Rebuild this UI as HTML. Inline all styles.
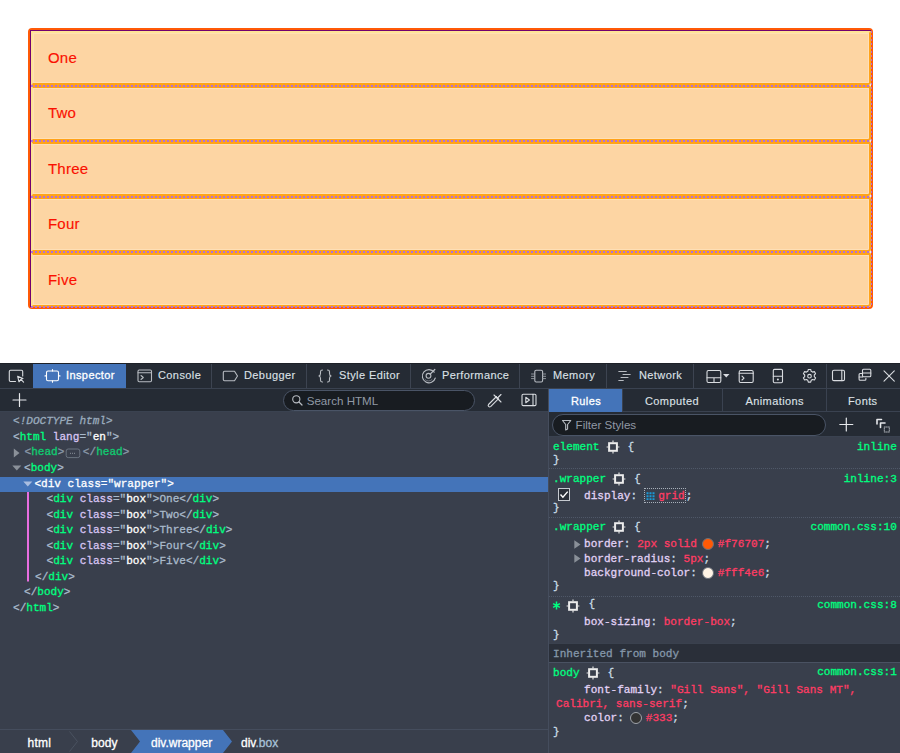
<!DOCTYPE html>
<html><head><meta charset="utf-8">
<style>
*{box-sizing:border-box;margin:0;padding:0}
html,body{width:900px;height:753px;overflow:hidden;background:#fff;position:relative}
body{font-family:"Liberation Sans",sans-serif}
.a{position:absolute}
/* content */
/* devtools */
#dt{left:0;top:363px;width:900px;height:391px;background:#393f4c}
#tb{left:0;top:363px;width:900px;height:26px;background:#252b34;border-bottom:1px solid #3a4250;border-top:1px solid #1d2128}
.tab{position:absolute;top:0;height:24px;color:#dde1e6;font-size:11px;letter-spacing:0.4px;line-height:23px;white-space:nowrap;-webkit-text-stroke:0.12px currentColor}
.sep{position:absolute;top:0;width:1px;height:24px;background:#3d4451}
#row2{left:0;top:389px;width:900px;height:23px;background:#252b34;border-bottom:1px solid #3a4250}
.mono{font-family:"Liberation Mono",monospace;font-size:11.07px;white-space:pre;-webkit-text-stroke:0.3px currentColor}
.ln{position:absolute;left:0;height:15.54px;line-height:15.54px;width:548px}
.pu{color:#a9bacb}.tg{color:#00ff80}.at{color:#d7c4f2}.av{color:#fff}.tx{color:#a9bacb}
.sel .pu,.sel .tg,.sel .at,.sel .av,.sel .tx{color:#fff}
</style></head><body>
<!-- page content -->
<style>
#wrap{left:28px;top:28px;width:845px;height:281px;border:2px solid #ff5a08;border-radius:4px;background:#fff4e6}
.box{position:absolute;left:30px;width:841px;border:2px solid #ffa31a;border-left:3px solid #ffe396;border-radius:3px;background:#fdd5a3;color:#fa1000;font-size:15px;letter-spacing:0.25px;line-height:18px;padding-left:14.9px;-webkit-text-stroke:0.15px currentColor;box-shadow:inset 0 0 0 1px #fedfb6}
.dl{left:31px;width:840px;height:2px;background-image:radial-gradient(circle at 1px 1px,#b070d8 0,#b070d8 0.9px,rgba(176,112,216,0) 1.2px);background-size:4px 2px}
</style>
<div id="wrap" class="a"></div>
<div class="box" style="top:30.0px;height:55.4px;border-top:3px solid #ffe396;padding-top:16px">One</div>
<div class="box" style="top:85.4px;height:55.4px;border-top:3px solid #ffa31a;padding-top:16px">Two</div>
<div class="box" style="top:140.8px;height:55.4px;border-top:3px solid #ffa31a;padding-top:16px">Three</div>
<div class="box" style="top:196.2px;height:55.4px;border-top:3px solid #ffa31a;padding-top:16px">Four</div>
<div class="box" style="top:251.6px;height:55.4px;border-top:3px solid #ffa31a;padding-top:16px">Five</div>

<div class="a" style="left:30px;top:30px;width:841px;height:1px;background:#720070"></div>
<div class="a" style="left:30px;top:30px;width:1px;height:277px;background:#720070"></div>
<div class="a dl" style="top:85.0px"></div>
<div class="a dl" style="top:140.4px"></div>
<div class="a dl" style="top:195.8px"></div>
<div class="a dl" style="top:251.2px"></div>
<div class="a dl" style="top:306.1px"></div>
<div class="a" style="left:871px;top:31px;width:1px;height:276px;background-image:linear-gradient(180deg,#b070d8 0,#b070d8 2px,transparent 2px);background-size:1px 4px"></div>
<!-- devtools -->
<div id="dt" class="a"></div>
<div id="tb" class="a">
  <div class="tab" style="left:32.5px;top:0;height:24px;width:93px;background:#4474b9"></div>
  <div class="tab" style="left:66px;color:#fff;-webkit-text-stroke:0.3px #fff">Inspector</div>
  <div class="tab" style="left:158px">Console</div>
  <div class="sep" style="left:211px"></div>
  <div class="tab" style="left:244px">Debugger</div>
  <div class="sep" style="left:306px"></div>
  <div class="tab" style="left:339px">Style Editor</div>
  <div class="sep" style="left:410px"></div>
  <div class="tab" style="left:442px">Performance</div>
  <div class="sep" style="left:519px"></div>
  <div class="tab" style="left:553px">Memory</div>
  <div class="sep" style="left:606px"></div>
  <div class="tab" style="left:639px">Network</div>
  <div class="sep" style="left:693px"></div>
  <div class="sep" style="left:826px"></div>
</div>
<svg class="a" style="left:0;top:362px" width="900" height="26" viewBox="0 362 900 26" fill="none" stroke="#d9dce0" stroke-width="1.1" stroke-linecap="round" stroke-linejoin="round">
  <!-- picker -->
  <path d="M15.5 381.5H10.5a1.2 1.2 0 0 1-1.2-1.2V371.5a1.2 1.2 0 0 1 1.2-1.2h11a1.2 1.2 0 0 1 1.2 1.2V376"/>
  <path d="M17.6 376.2L23 378.4L20.9 379.3L23.6 382.1M17.6 376.2L19 381.8L20.9 379.3" stroke-width="1.1"/>
  <!-- inspector -->
  <rect x="46.5" y="371" width="12" height="9.8" rx="1.5" stroke="#fff"/>
  <path d="M52.5 369.5v1.5M52.5 380.8v1.5M45 375.9h1.5M58.5 375.9h1.5" stroke="#fff"/>
  <!-- console -->
  <rect x="138" y="370" width="13.5" height="11.8" rx="1.2" stroke="#b8bcc2"/>
  <path d="M138 372.8h13.5M141 375.5l2.3 2-2.3 2" stroke="#b8bcc2"/>
  <!-- debugger -->
  <path d="M224.5 371.2h10l3 4.8-3 4.8h-10a1.2 1.2 0 0 1-1.2-1.2v-7.2a1.2 1.2 0 0 1 1.2-1.2z" stroke="#b8bcc2"/>
  <!-- style editor -->
  <path d="M322.5 370c-1.5 0-2 .5-2 1.8v1.8c0 1.3-.6 2.2-1.6 2.4 1 .2 1.6 1.1 1.6 2.4v1.8c0 1.3.5 1.8 2 1.8M327.5 370c1.5 0 2 .5 2 1.8v1.8c0 1.3.6 2.2 1.6 2.4-1 .2-1.6 1.1-1.6 2.4v1.8c0 1.3-.5 1.8-2 1.8" stroke="#b8bcc2"/>
  <!-- performance -->
  <path d="M434.2 372.2A6.6 6.6 0 1 0 435.3 378" stroke="#b8bcc2"/>
  <circle cx="428.5" cy="375.8" r="2.4" stroke="#b8bcc2"/>
  <path d="M430.2 374.1L434.8 369.5" stroke="#b8bcc2" stroke-width="1.3"/>
  <path d="M425 379.5a4.6 4.6 0 0 0 7 0" stroke="#7d838c" stroke-width="0.8"/>
  <!-- memory -->
  <rect x="534.8" y="370.2" width="7.8" height="11.8" rx="1.4" stroke="#b8bcc2"/>
  <path d="M531.5 374h3M531.5 376.3h3M531.5 378.6h3M542.6 374h3M542.6 376.3h3M542.6 378.6h3" stroke="#9ba0a8" stroke-width="0.9"/>
  <!-- network -->
  <path d="M618.8 371.5h7.5M623 374.5h7.2M621 377.5h7M618.8 380.5h4.5" stroke="#b8bcc2"/>
  <!-- frames -->
  <rect x="707" y="370.5" width="13.8" height="12" rx="1.4" stroke="#d9dce0"/>
  <path d="M707 377.8h13.8M714 377.8v4.7" stroke="#d9dce0"/>
  <path d="M723 374h6.5l-3.25 3.6z" fill="#d9dce0" stroke="none"/>
  <!-- split console -->
  <rect x="739.2" y="370.5" width="14" height="12" rx="1.4" stroke="#d9dce0"/>
  <path d="M739.2 373.3h14M742 376.2l2 1.9-2 1.9" stroke="#d9dce0"/>
  <!-- responsive -->
  <rect x="773.3" y="369.4" width="9.2" height="13.4" rx="1.2" stroke="#d9dce0"/>
  <path d="M773.3 376.2h9.2" stroke="#d9dce0"/>
  <circle cx="777.9" cy="379.5" r="1" fill="#d9dce0" stroke="none"/>
  <!-- gear -->
  <path d="M808.3 369.5h2.4l.5 1.8 1.4.8 1.8-.5 1.2 2.1-1.3 1.3v1.6l1.3 1.3-1.2 2.1-1.8-.5-1.4.8-.5 1.8h-2.4l-.5-1.8-1.4-.8-1.8.5-1.2-2.1 1.3-1.3v-1.6l-1.3-1.3 1.2-2.1 1.8.5 1.4-.8z" stroke="#d9dce0"/>
  <circle cx="809.5" cy="376.2" r="1.8" stroke="#d9dce0"/>
  <!-- dock side -->
  <rect x="832.5" y="370.3" width="12" height="10.3" rx="1.4" stroke="#d9dce0"/>
  <path d="M841.8 370.3v10.3" stroke="#d9dce0"/>
  <!-- separate window -->
  <path d="M862.5 373.5h-2.4a1 1 0 0 0-1 1v4.8a1 1 0 0 0 1 1h4.8a1 1 0 0 0 1-1v-1" stroke="#d9dce0"/>
  <path d="M859.2 377h3.3" stroke="#d9dce0"/>
  <rect x="862.5" y="369.2" width="8.3" height="7.6" rx="1" stroke="#d9dce0"/>
  <path d="M862.5 373h8.3" stroke="#d9dce0"/>
  <!-- close -->
  <path d="M884 370.8l10.3 10.3M894.3 370.8L884 381.1" stroke="#d9dce0"/>
</svg>
<div id="row2" class="a"></div>
<!-- search -->
<div class="a" style="left:283.3px;top:389.8px;width:191.7px;height:21.6px;border:1px solid #4a5466;border-radius:11px;background:#181c21"></div>
<svg class="a" style="left:0;top:388px" width="900" height="50" viewBox="0 388 900 50" fill="none" stroke="#d9dce0" stroke-width="1.1" stroke-linecap="round" stroke-linejoin="round">
  <path d="M13 400h13M19.5 393.5v13" stroke="#e6e8eb" stroke-width="1.2"/>
  <circle cx="296.3" cy="399.3" r="3.6" stroke="#b8bcc2"/>
  <path d="M299 402l3 3" stroke="#b8bcc2" stroke-width="1.2"/>
  <!-- eyedropper -->
  <path d="M496.5 396.5l-8 8a1.5 1.5 0 0 0 2.1 2.1l8-8" stroke="#d9dce0"/>
  <path d="M494 395l7 7M497 398.5l4-4" stroke="#d9dce0"/>
  <!-- sidebar toggle -->
  <rect x="522" y="394.3" width="14" height="11.3" rx="1.2" stroke="#d9dce0"/>
  <path d="M533 394.3v11.3" stroke="#d9dce0"/>
  <path d="M525.8 397.3v5.5l3.6-2.75z" stroke="#d9dce0"/>
</svg>
<div class="a" style="left:306.7px;top:393px;font-size:11.6px;line-height:16px;color:#9199a5">Search HTML</div>

<!-- sidebar tabs -->
<div class="a" style="left:548px;top:389px;width:1px;height:364px;background:#454d5d"></div>
<div class="a" style="left:549px;top:389px;width:73px;height:23px;background:#4474b9"></div>
<div class="a" style="left:622px;top:389px;width:1px;height:23px;background:#3a4250"></div>
<div class="a" style="left:722px;top:389px;width:1px;height:23px;background:#3a4250"></div>
<div class="a" style="left:826px;top:389px;width:1px;height:23px;background:#3a4250"></div>
<div class="tab" style="left:571px;top:389.5px;height:23px;line-height:23px;color:#fff;-webkit-text-stroke:0.3px #fff">Rules</div>
<div class="tab" style="left:645px;top:389.5px;height:23px;line-height:23px">Computed</div>
<div class="tab" style="left:745.5px;top:389.5px;height:23px;line-height:23px">Animations</div>
<div class="tab" style="left:848px;top:389.5px;height:23px;line-height:23px">Fonts</div>
<!-- filter row -->
<div class="a" style="left:549px;top:412px;width:351px;height:25px;background:#252b34;border-bottom:1px solid #3a4250"></div>
<div class="a" style="left:552px;top:414.3px;width:274px;height:21.4px;border:1px solid #4a5466;border-radius:11px;background:#181c21"></div>
<div class="a" style="left:575.6px;top:417px;font-size:11.6px;line-height:16px;color:#9199a5">Filter Styles</div>
<svg class="a" style="left:0;top:388px" width="900" height="50" viewBox="0 388 900 50" fill="none" stroke-linecap="round" stroke-linejoin="round">
  <path d="M562.5 420.5h8.3l-3.2 4v4.5l-1.9 1v-5.5z" stroke="#b8bcc2" stroke-width="1.1"/>
  <path d="M839.8 424.5h13M846.3 418v13" stroke="#e6e8eb" stroke-width="1.2"/>
  <path d="M877 424v-4.5h4.5" stroke="#e6e8eb" stroke-width="1.6"/>
  <path d="M880.5 427.5v-4.5h4.5" stroke="#e6e8eb" stroke-width="1.6"/>
  <rect x="884.3" y="427" width="5" height="5" stroke="#c8ccd2" stroke-width="0.8" stroke-dasharray="1 1"/>
</svg>

<!-- markup panel -->
<div class="a mono" style="left:0;top:414.4px;width:548px">
 <div class="ln" style="top:0;left:13px"><i style="color:#9aabbd">&lt;!DOCTYPE html&gt;</i></div>
 <div class="ln" style="top:15.54px;left:13px"><span class="pu">&lt;</span><span class="tg">html</span> <span class="at">lang</span><span class="pu">="</span><span class="av">en</span><span class="pu">"&gt;</span></div>
 <div class="ln" style="top:31.08px;left:24.5px;opacity:.72"><span class="pu">&lt;</span><span class="tg">head</span><span class="pu">&gt;</span><span style="display:inline-block;width:18.5px"></span><span class="pu">&lt;/</span><span class="tg">head</span><span class="pu">&gt;</span></div>
 <div class="ln" style="top:46.62px;left:24px"><span class="pu">&lt;</span><span class="tg">body</span><span class="pu">&gt;</span></div>
 <div class="ln sel" style="top:62.16px;left:0;background:#4474b9;padding-left:34.4px;width:548px"><span class="pu">&lt;</span><span class="tg">div</span> <span class="at">class</span><span class="pu">="</span><span class="av">wrapper</span><span class="pu">"&gt;</span></div>
 <div class="ln" style="top:77.70px;left:46.5px"><span class="pu">&lt;</span><span class="tg">div</span> <span class="at">class</span><span class="pu">="</span><span class="av">box</span><span class="pu">"&gt;</span><span class="tx">One</span><span class="pu">&lt;/</span><span class="tg">div</span><span class="pu">&gt;</span></div>
 <div class="ln" style="top:93.24px;left:46.5px"><span class="pu">&lt;</span><span class="tg">div</span> <span class="at">class</span><span class="pu">="</span><span class="av">box</span><span class="pu">"&gt;</span><span class="tx">Two</span><span class="pu">&lt;/</span><span class="tg">div</span><span class="pu">&gt;</span></div>
 <div class="ln" style="top:108.78px;left:46.5px"><span class="pu">&lt;</span><span class="tg">div</span> <span class="at">class</span><span class="pu">="</span><span class="av">box</span><span class="pu">"&gt;</span><span class="tx">Three</span><span class="pu">&lt;/</span><span class="tg">div</span><span class="pu">&gt;</span></div>
 <div class="ln" style="top:124.32px;left:46.5px"><span class="pu">&lt;</span><span class="tg">div</span> <span class="at">class</span><span class="pu">="</span><span class="av">box</span><span class="pu">"&gt;</span><span class="tx">Four</span><span class="pu">&lt;/</span><span class="tg">div</span><span class="pu">&gt;</span></div>
 <div class="ln" style="top:139.86px;left:46.5px"><span class="pu">&lt;</span><span class="tg">div</span> <span class="at">class</span><span class="pu">="</span><span class="av">box</span><span class="pu">"&gt;</span><span class="tx">Five</span><span class="pu">&lt;/</span><span class="tg">div</span><span class="pu">&gt;</span></div>
 <div class="ln" style="top:155.40px;left:35px"><span class="pu">&lt;/</span><span class="tg">div</span><span class="pu">&gt;</span></div>
 <div class="ln" style="top:170.94px;left:24px"><span class="pu">&lt;/</span><span class="tg">body</span><span class="pu">&gt;</span></div>
 <div class="ln" style="top:186.48px;left:13px"><span class="pu">&lt;/</span><span class="tg">html</span><span class="pu">&gt;</span></div>
</div>
<svg class="a" style="left:0;top:412px" width="548" height="200" viewBox="0 412 548 200">
  <path d="M13.8 448.5v9l5.7-4.5z" fill="#8a9099"/>
  <path d="M12.3 465.5h9l-4.5 5z" fill="#8a9099"/>
  <path d="M23.3 481.5h9l-4.5 5z" fill="#a9bde0"/>
  <rect x="66.2" y="449" width="13.6" height="8.6" rx="2" fill="none" stroke="#6b7480" stroke-width="1"/>
  <path d="M70 453.3h6" stroke="#8a929c" stroke-width="1" stroke-dasharray="1 1"/>
  <rect x="27" y="492" width="2" height="89.5" fill="#e86ee0"/>
</svg>

<!-- breadcrumbs -->
<div class="a" style="left:0;top:729px;width:548px;height:24px;border-top:1px solid #454d5d;background:#393f4c"></div>
<svg class="a" style="left:0;top:730px" width="548" height="23" viewBox="0 730 548 23">
  <path d="M69.5 731.5l8 10-8 10" fill="none" stroke="#4a5260" stroke-width="1"/>
  <path d="M131 730h92l9 11.5-9 11.5h-92l9-11.5z" fill="#4474b9"/>
</svg>
<div class="a" style="left:27.6px;top:735px;font-size:12px;letter-spacing:0.2px;line-height:16px;color:#fff;-webkit-text-stroke:0.3px #fff">html</div>
<div class="a" style="left:91.3px;top:735px;font-size:12px;letter-spacing:0.1px;line-height:16px;color:#fff;-webkit-text-stroke:0.3px #fff">body</div>
<div class="a" style="left:151px;top:735px;font-size:12px;line-height:16px;color:#fff;-webkit-text-stroke:0.3px #fff">div.wrapper</div>
<div class="a" style="left:241px;top:735px;font-size:12px;line-height:16px;color:#fff;-webkit-text-stroke:0.3px currentColor">div<span style="color:#a8c2d8">.box</span></div>
<!-- rules -->
<style>
.r{position:absolute;left:553px;height:14px;line-height:14px;font-family:"Liberation Mono",monospace;font-size:11.07px;white-space:pre;color:#c8dce6;-webkit-text-stroke:0.3px currentColor}
.src{position:absolute;right:3.2px;height:14px;line-height:14px;font-family:"Liberation Mono",monospace;font-size:11.07px;white-space:pre;color:#00ff80;-webkit-text-stroke:0.3px currentColor}
.sl{color:#00ff80}.pn{color:#e1d2f5}.pv{color:#ff3c64}.br{color:#c8dce6}.co{color:#c8dce6}
.rsep{position:absolute;left:549px;width:351px;height:1px;background-image:linear-gradient(90deg,#4f5868 0,#4f5868 1px,transparent 1px);background-size:2px 1px}
.hi{display:inline-block;vertical-align:top;margin:0 1.1px 0 -0.4px}
.sw{display:inline-block;width:12px;height:12px;border-radius:50%;vertical-align:top;margin-top:1px;box-sizing:border-box;border:1px solid #6a707a}
</style>
<div class="r" style="top:440px"><span class="sl">element</span> <svg class="hi" width="14" height="14" viewBox="0 0 14 14"><rect x="3.1" y="3.2" width="7.8" height="7.6" fill="none" stroke="#ececec" stroke-width="2"/><path d="M7 0.6v2M7 11v2.4M0.6 7h2.2M11.2 7h2.2" stroke="#e0e0e0" stroke-width="1.2"/></svg> <span class="br">{</span></div>
<div class="src" style="top:440px">inline</div>
<div class="r" style="top:453px">}</div>
<div class="rsep" style="top:468px"></div>
<div class="r" style="top:471.5px"><span class="sl">.wrapper</span> <svg class="hi" width="14" height="14" viewBox="0 0 14 14"><rect x="3.1" y="3.2" width="7.8" height="7.6" fill="none" stroke="#ececec" stroke-width="2"/><path d="M7 0.6v2M7 11v2.4M0.6 7h2.2M11.2 7h2.2" stroke="#e0e0e0" stroke-width="1.2"/></svg> <span class="br">{</span></div>
<div class="src" style="top:471.5px">inline:3</div>
<div class="a" style="left:557.5px;top:488.3px;width:12px;height:12.5px;border:1px solid #c6cad0;background:#2a2f38"></div>
<svg class="a" style="left:557.5px;top:488.3px" width="12" height="13" viewBox="0 0 12 13"><path d="M2.5 6.5l2.4 2.6 4.8-5.5" fill="none" stroke="#fff" stroke-width="1.4"/></svg>
<div class="r" style="top:489px;left:550.8px">     <span class="pn">display</span>: <span style="display:inline-block;width:42px;height:15px;vertical-align:top;position:relative;top:-1.5px"></span>;</div>
<div class="a" style="left:644.2px;top:487.5px;width:42px;height:15px;border:1px dotted #a8b0ba"></div>
<svg class="a" style="left:645.5px;top:490.5px" width="9" height="9" viewBox="0 0 9 9"><path d="M0.5 1.2h2v2h-2zM3.5 1.2h2v2h-2zM6.5 1.2h2v2h-2zM0.5 4.2h2v2h-2zM3.5 4.2h2v2h-2zM6.5 4.2h2v2h-2zM0.5 7.2h2v2h-2zM3.5 7.2h2v2h-2zM6.5 7.2h2v2h-2z" fill="#1a9ad8"/></svg>
<div class="r" style="top:489px;left:658.2px"><span class="pv">grid</span></div>
<div class="r" style="top:501px">}</div>
<div class="rsep" style="top:517px"></div>
<div class="r" style="top:520px"><span class="sl">.wrapper</span> <svg class="hi" width="14" height="14" viewBox="0 0 14 14"><rect x="3.1" y="3.2" width="7.8" height="7.6" fill="none" stroke="#ececec" stroke-width="2"/><path d="M7 0.6v2M7 11v2.4M0.6 7h2.2M11.2 7h2.2" stroke="#e0e0e0" stroke-width="1.2"/></svg> <span class="br">{</span></div>
<div class="src" style="top:520px">common.css:10</div>
<svg class="a" style="left:573.5px;top:539.5px" width="7" height="9" viewBox="0 0 7 9"><path d="M0.3 0.3v8.4l6.2-4.2z" fill="#8a9099"/></svg>
<svg class="a" style="left:573.5px;top:554px" width="7" height="9" viewBox="0 0 7 9"><path d="M0.3 0.3v8.4l6.2-4.2z" fill="#8a9099"/></svg>
<div class="r" style="top:537px;left:550.8px">     <span class="pn">border</span><span class="co">:</span> <span class="pv">2px solid</span> <span class="sw" style="background:#ff5a06;margin-left:-1.2px;margin-right:3.5px"></span><span class="pv">#f76707</span><span class="co">;</span></div>
<div class="r" style="top:552px;left:550.8px">     <span class="pn">border-radius</span><span class="co">:</span> <span class="pv">5px</span><span class="co">;</span></div>
<div class="r" style="top:566px;left:550.8px">     <span class="pn">background-color</span><span class="co">:</span> <span class="sw" style="background:#fff4e6;margin-left:-1.2px;margin-right:3.5px"></span><span class="pv">#fff4e6</span><span class="co">;</span></div>
<div class="r" style="top:578.5px">}</div>
<div class="rsep" style="top:595.5px"></div>
<div class="r" style="top:596.5px;left:553px"><span style="display:inline-block;width:6.64px"></span> <svg class="hi" style="margin-left:-0.3px;margin-right:1.8px;position:relative;top:2px" width="14" height="14" viewBox="0 0 14 14"><rect x="3.1" y="3.2" width="7.8" height="7.6" fill="none" stroke="#ececec" stroke-width="2"/><path d="M7 0.6v2M7 11v2.4M0.6 7h2.2M11.2 7h2.2" stroke="#e0e0e0" stroke-width="1.2"/></svg> <span class="br">{</span></div>
<svg class="a" style="left:552px;top:601px" width="9" height="9" viewBox="0 0 9 9"><path d="M4.5 0.6v7.8M1.1 2.55l6.8 3.9M1.1 6.45l6.8-3.9" stroke="#00ff80" stroke-width="1.5"/></svg>
<div class="src" style="top:597.5px">common.css:8</div>
<div class="r" style="top:614.5px;left:550.8px">     <span class="pn">box-sizing</span><span class="co">:</span> <span class="pv">border-box</span><span class="co">;</span></div>
<div class="r" style="top:628px">}</div>
<div class="a" style="left:549px;top:643px;width:351px;height:20px;background:#2a2f39;border-top:1px solid #3a414e;border-bottom:1px solid #4a5262"></div>
<div class="r" style="top:646.5px;color:#8597aa">Inherited from body</div>
<div class="r" style="top:666px"><span class="sl">body</span> <svg class="hi" width="14" height="14" viewBox="0 0 14 14"><rect x="3.1" y="3.2" width="7.8" height="7.6" fill="none" stroke="#ececec" stroke-width="2"/><path d="M7 0.6v2M7 11v2.4M0.6 7h2.2M11.2 7h2.2" stroke="#e0e0e0" stroke-width="1.2"/></svg> <span class="br">{</span></div>
<div class="src" style="top:664.5px">common.css:1</div>
<div class="r" style="top:682.5px;left:550.8px">     <span class="pn">font-family</span><span class="co">:</span> <span class="pv">"Gill Sans", "Gill Sans MT",</span></div>
<div class="r" style="top:697px;left:556px"><span class="pv">Calibri, sans-serif</span><span class="co">;</span></div>
<div class="r" style="top:711px;left:550.8px">     <span class="pn">color</span><span class="co">:</span> <span class="sw" style="background:#333;border-color:#a0a4aa;margin-left:-0.2px;margin-right:3.5px"></span><span class="pv">#333</span><span class="co">;</span></div>
<div class="r" style="top:724.5px">}</div>
</body></html>
